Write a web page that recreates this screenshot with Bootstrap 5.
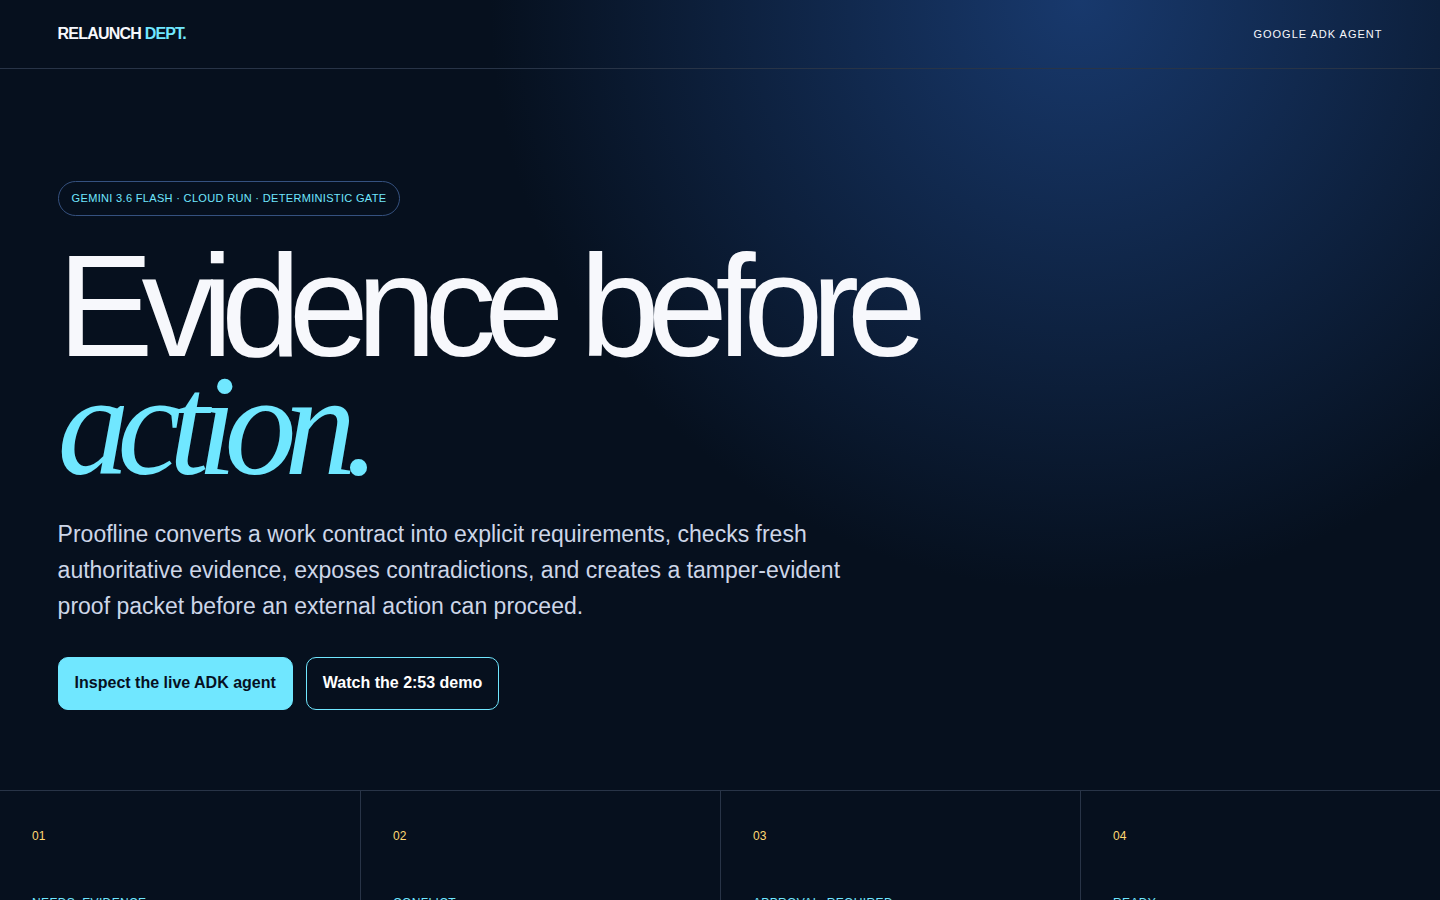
<!DOCTYPE html>
<html lang="en">
<head>
<meta charset="utf-8">
<meta name="viewport" content="width=device-width, initial-scale=1">
<title>Proofline – Relaunch Dept.</title>
<link href="https://cdn.jsdelivr.net/npm/bootstrap@5.3.0/dist/css/bootstrap.min.css" rel="stylesheet">
<style>
  :root { --ink: #06101e; --paper: #f7f8fc; --cyan: #70e7ff; --gold: #ffd872; --rule: #283447; }
  body { background: var(--ink); color: var(--paper); font-family: "Liberation Sans", Arial, sans-serif; }
  .page-glow { background: radial-gradient(circle at 75% 0, #18396d 0, var(--ink) 590px); }
  .gutter { padding-left: 4vw; padding-right: 4vw; }
  .site-header { height: 69px; border-bottom: 1px solid var(--rule); }
  .brand { font-size: 16px; letter-spacing: -.05em; color: var(--paper); }
  .brand span, .hero-title em { color: var(--cyan); }
  .header-note { font-size: 11px; letter-spacing: .09em; }
  .hero { padding-top: 112px; padding-bottom: 80px; }
  .tag { font-size: 11px; line-height: 17px; padding: 8px 13px; letter-spacing: .03em; color: var(--cyan); border: 1px solid #35517f; }
  .hero-title { font-size: 144px; line-height: 118px; letter-spacing: -.085em; font-weight: 400; max-width: 1100px; margin: 32px 0 31px; }
  .hero-title em { font-family: "Liberation Serif", "Times New Roman", serif; }
  .intro { font-size: 23px; line-height: 36px; max-width: 820px; color: #cdd6e8; margin-bottom: 33px; }
  .actions { gap: 13px; }
  .cta { --bs-btn-border-radius: 10px; --bs-btn-font-weight: 700; --bs-btn-padding-x: 16px; --bs-btn-padding-y: 13px; --bs-btn-line-height: 24px; --bs-btn-border-color: var(--cyan); --bs-btn-color: #fff; padding-bottom: 14px; }
  .cta-main { --bs-btn-bg: var(--cyan); --bs-btn-color: #06101f; }
  .states { border-top: 1px solid var(--rule); }
  .state { padding: 36px 32px; min-height: 260px; font-size: 12px; line-height: 18px; }
  .state + .state { border-left: 1px solid var(--rule); }
  .state-no { color: var(--gold); }
  .state h2 { font-size: 12px; line-height: 18px; letter-spacing: .03em; font-weight: 400; color: var(--cyan); margin: 49px 0 0; }
</style>
</head>
<body>
<div class="page-glow">
  <header class="site-header gutter d-flex align-items-center justify-content-between">
    <a href="#" class="brand fw-bold text-decoration-none">RELAUNCH <span>DEPT.</span></a>
    <span class="header-note">GOOGLE ADK AGENT</span>
  </header>
  <main>
    <section class="hero gutter d-flex flex-column align-items-start">
      <span class="tag rounded-pill">GEMINI 3.6 FLASH · CLOUD RUN · DETERMINISTIC GATE</span>
      <h1 class="hero-title">Evidence before <em>action.</em></h1>
      <p class="intro">Proofline converts a work contract into explicit requirements, checks fresh authoritative evidence, exposes contradictions, and creates a tamper-evident proof packet before an external action can proceed.</p>
      <div class="actions d-flex flex-wrap">
        <a href="#" class="btn cta cta-main">Inspect the live ADK agent</a>
        <a href="#" class="btn cta">Watch the 2:53 demo</a>
      </div>
    </section>
    <section class="states row row-cols-4 g-0">
      <article class="col state"><div class="state-no">01</div><h2>NEEDS_EVIDENCE</h2></article>
      <article class="col state"><div class="state-no">02</div><h2>CONFLICT</h2></article>
      <article class="col state"><div class="state-no">03</div><h2>APPROVAL_REQUIRED</h2></article>
      <article class="col state"><div class="state-no">04</div><h2>READY</h2></article>
    </section>
  </main>
</div>
<script src="https://cdn.jsdelivr.net/npm/bootstrap@5.3.0/dist/js/bootstrap.bundle.min.js"></script>
</body>
</html>
